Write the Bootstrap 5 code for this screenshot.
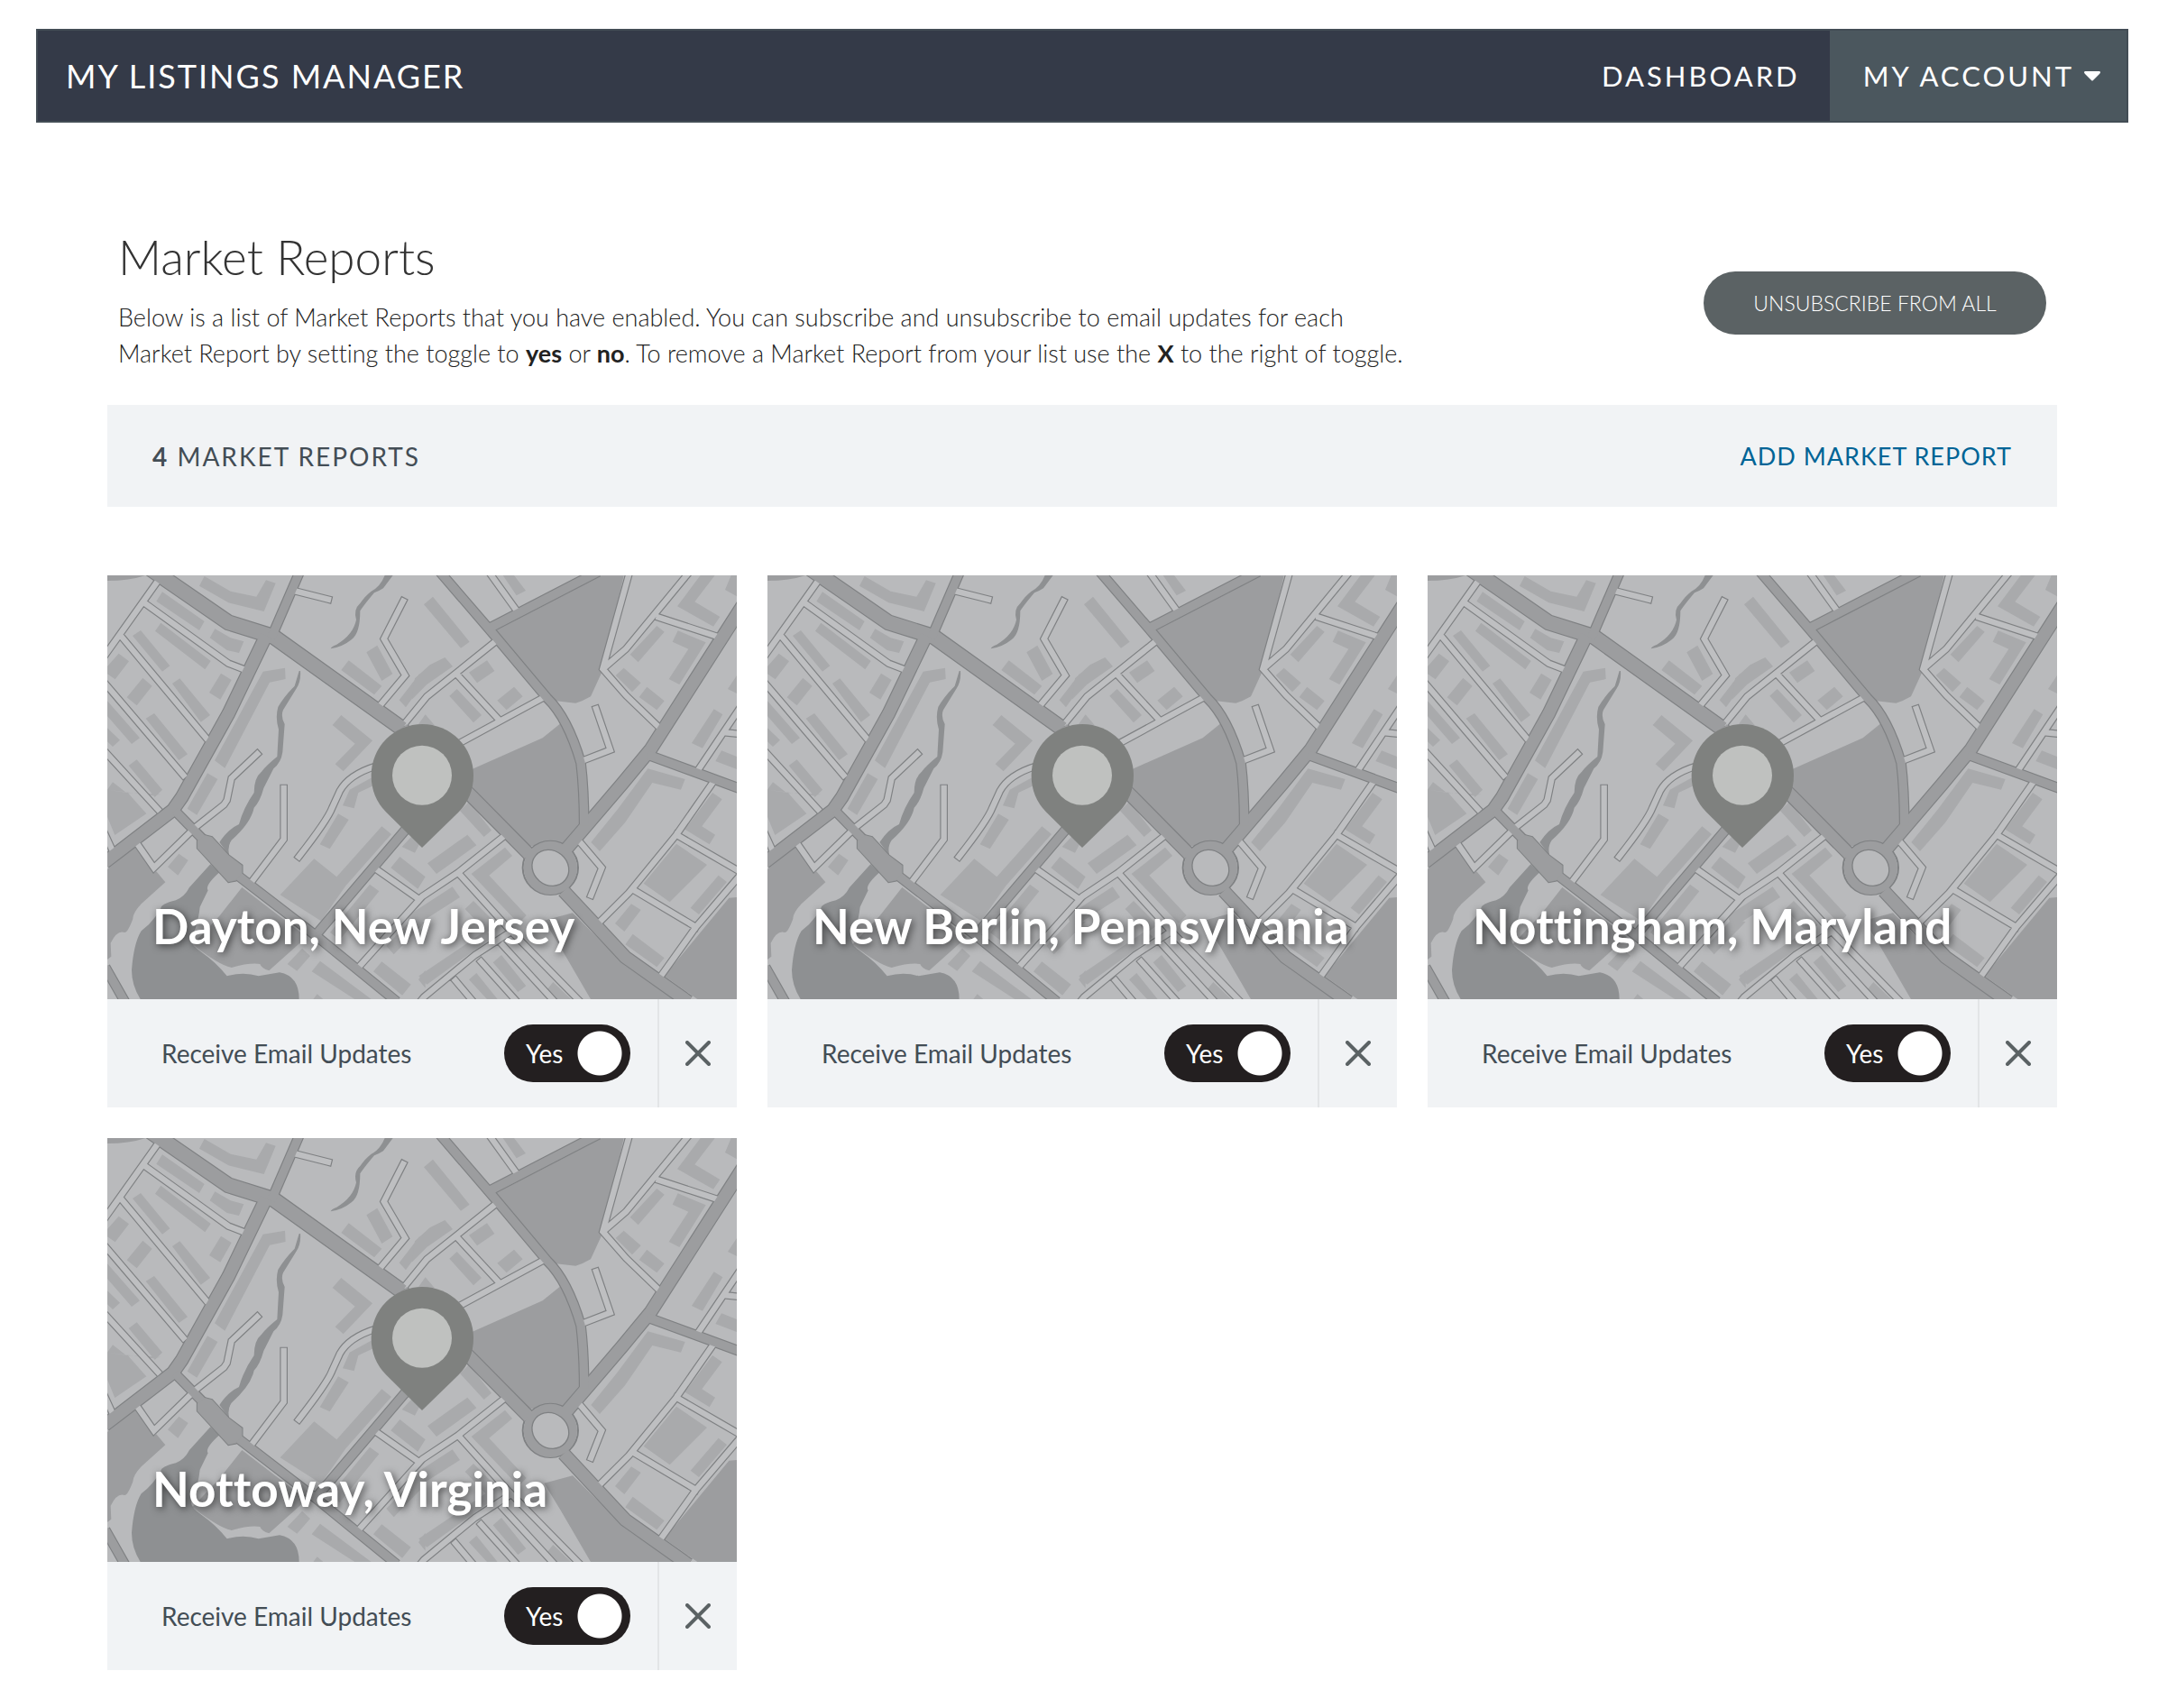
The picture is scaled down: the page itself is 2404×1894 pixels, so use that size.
<!DOCTYPE html>
<html lang="en">
<head>
<meta charset="utf-8">
<meta name="viewport" content="width=device-width, initial-scale=1">
<title>My Listings Manager</title>
<link href="https://cdn.jsdelivr.net/npm/bootstrap@5.3.0/dist/css/bootstrap.min.css" rel="stylesheet">
<style>
  body { font-family: Lato, "Open Sans", sans-serif; font-size: 28px; line-height: 40px; color: #333; background: #fff; font-variant-ligatures: none; }
  .page-frame { padding: 32px 44px 40px 40px; }
  .top-bar { background: #343a48; border: 2px solid #434d55; height: 104px; color: #fff; }
  .top-bar a, .top-bar button { color: #fff; text-decoration: none; }
  .brand-link { font-size: 36px; letter-spacing: 2px; padding-left: 31px; }
  .menu-item { font-size: 31px; letter-spacing: 3px; }
  .menu-dash { padding: 0 33px 0 32px; }
  .menu-account { background: #4b575e; border: 0; padding: 0 29px 0 37px; gap: 11px; }
  .page-body { padding: 119px 79px 0; }
  .page-title { font-size: 53px; line-height: 60px; font-weight: 300; margin-bottom: 17px; }
  .page-intro { font-size: 27px; font-weight: 300; color: #222; margin-bottom: 37px; }
  .page-intro b { font-weight: 700; }
  .unsub-btn { width: 380px; height: 70px; margin-top: 46px; border-radius: 35px; background: #5b6264; color: #fff; font-size: 23px; font-weight: 300; }
  .unsub-btn:hover { background: #4b575e; color: #fff; }
  .count-bar { background: #f1f3f5; min-height: 113px; padding: 0 50px; color: #434d55; margin-bottom: 76px; }
  .count-text { letter-spacing: 2px; }
  .add-link { color: #006496; text-decoration: none; font-size: 27px; letter-spacing: 1px; }
  .report-grid { --bs-gutter-x: 34px; --bs-gutter-y: 34px; }
  .report-map { width: 100%; height: auto; aspect-ratio: 698 / 470; display: block; }
  .report-name { left: 50px; bottom: 51px; font-size: 53px; line-height: 60px; font-weight: 700; color: #fff; text-shadow: 2px 2px 8px rgba(0,0,0,.6); margin: 0; white-space: nowrap; }
  .report-foot { background: #f1f3f5; height: 120px; color: #434d55; }
  .foot-main { padding: 0 30px 0 60px; }
  .foot-close { width: 88px; border: 0; border-left: 2px solid #e3e5e7; background: transparent; padding: 0; }
  .yes-switch { width: 140px; height: 64px; }
  .yes-switch input { appearance: none; width: 140px; height: 64px; border-radius: 32px; margin: 0; display: block; background: #231f20 radial-gradient(circle at 106px 32px, #fff 24px, transparent 25px); cursor: pointer; }
  .yes-word { left: 24px; top: 12px; color: #fff; pointer-events: none; }
  .casing { fill: none; stroke: #7f8183; stroke-linejoin: miter; }
  .lane { fill: none; stroke: #bebfc1; stroke-linejoin: miter; }
  .avenue { fill: none; stroke: #9c9d9f; stroke-linejoin: miter; }
</style>
<script src="https://cdn.jsdelivr.net/npm/bootstrap@5.3.0/dist/js/bootstrap.bundle.min.js"></script>
</head>
<body>

<svg width="0" height="0" class="position-absolute" aria-hidden="true">
  <defs>
    <!-- minor streets -->
    <g id="lanes">
      <path d="M192,50 20,292M155,122 430,320 485,341M76,233 355,567M20,387 280,692M20,614 195,805M655,80 762,107M1011,113 947,238 1018,360 938,455M1018,518 1090,430 1312,252M526,621 440,702 425,775 415,790 320,865 182,1000 130,925M614,735V905L508,1045M920,662Q830,690 800,745L775,800Q760,840 664,963M20,890 42,938M925,1007 1065,1105M868,1325 1075,1095 1195,1015 1350,892M1197,1020 1360,1200 1595,1440M1370,1212 1250,1290 1080,1430 1070,1442M1185,1375 1240,1440M1270,1312 1385,1440M1342,1257 1510,1440M1305,28 1387,142M1763,20 1675,338 1753,427 1860,530M1960,20 1752,272 1685,330M1862,167 2060,232M1653,471 1700,608 1612,642M1190,590 1475,435M1195,362 1325,502M2130,470 1992,675M2085,550 2130,555M2037,722 1920,890 1762,1083 1665,1180M1920,890 2130,1012M1780,1075 1985,1197M2140,1015 1985,1197 1872,1355M1600,915 1672,1000 1636,1091"/>
    </g>
    <!-- through roads, grouped by width -->
    <g id="roads-wide"><path d="M170,5 430,184 580,231 1008,537"/></g>
    <g id="roads-mid"><path d="M555,228 430,487 275,765 245,808 18,982M1008,537 1240,763 1430,955M1545,1077 1750,1297 1960,1446M2145,120 1835,605 1740,720 1545,948"/></g>
    <g id="roads-slim"><path d="M667,15 572,235M252,810 345,905 450,1017 720,1225 990,1445M726,1217 1030,860M1133,15 1305,215 1490,435Q1558,500 1602,650 1613,740 1613,860M1660,15 1295,204M1825,624 2135,738M20,1330 88,1450"/></g>
    <path id="bridge" d="M352,892 375,898 430,958 475,992V1018L455,1042 430,1047 327,935V910Z"/>
    <symbol id="city-map" viewBox="27 27 2094 1410" preserveAspectRatio="none">
      <rect x="27" y="27" width="2094" height="1410" fill="#b9babc"/>
      <!-- parks -->
      <g fill="#9c9d9f">
        <path d="M27,27H155Q100,45 27,45Z"/>
        <path d="M1315,213 1670,28H1745L1675,343 1635,430Q1610,445 1585,452L1520,445Z"/>
        <path d="M1540,515 1475,568 1240,672 1225,745 1433,928H1533L1598,850V720L1580,600Z"/>
        <path d="M27,1005 120,930 182,1017 190,1012 220,1048 140,1120Q112,1150 112,1170 95,1215 85,1215 60,1205 38,1250L40,1295 27,1305Z"/>
        <path d="M475,1065 690,1230 565,1342Q540,1335 535,1320 500,1315 440,1332 400,1325 310,1255L400,1160Z"/>
        <path d="M1480,1175 1575,1150 1750,1325 1910,1437H1635L1535,1265Z"/>
        <path d="M2121,1098 2095,1100 1880,1360 1990,1437H2121Z"/>
      </g>
      <!-- water -->
      <g fill="#8e9092">
        <path d="M370,988 300,1065Q285,1095 255,1108 205,1120 205,1135 180,1180 140,1210 115,1250 108,1340 108,1390 137,1437H665Q665,1360 600,1348 560,1355 530,1360 480,1345 425,1360 390,1315 340,1280 295,1250 310,1230 330,1180 335,1130L362,1075Q350,1060 400,1015Z"/>
        <path d="M665,345H669Q672,380 655,405L612,475Q603,495 617,522L610,615Q605,650 580,670L547,735Q535,780 515,800 505,850 440,908 425,930 433,960L400,915Q430,870 465,855 480,800 515,750 515,700 540,680 555,660 592,630L597,540Q585,500 595,465 615,430 650,395Z"/>
        <path d="M950,27H977L945,70Q930,80 915,85 885,120 868,145 868,220 840,240 810,265 770,271 770,265 790,257 845,225 855,175 845,140 868,120 885,95 905,80 935,65 950,27Z"/>
      </g>
      <!-- buildings -->
      <g fill="#a9aaac">
        <path d="M350,30 437,80 523,98 555,43 587,53 548,147 430,118 333,62ZM210,82 350,180 333,210 190,113ZM385,205 437,235 481,247 465,285 425,276 368,235ZM205,185 371,312 352,340 186,212ZM138,210 235,328 210,347 111,228ZM65,287 99,313 53,373 27,355V330ZM145,368 176,395 125,460 92,433ZM405,353 440,375 403,440 366,417ZM268,370 369,492 338,515 243,387ZM183,486 294,622 265,642 155,503ZM27,445 135,568 108,588 27,495ZM27,535 69,575 45,597 27,580ZM125,640 210,740 185,765 98,660ZM545,347 618,335 620,372 567,383 418,668 384,643ZM360,685 394,705 325,824 293,803ZM830,310 940,395 915,424 805,342ZM925,260 976,355 940,378 889,283ZM805,492 909,577 812,679 785,655 851,587 776,525ZM1065,355 1085,375 1020,466 998,442ZM45,715 90,750 205,755 180,760 27,740ZM27,740 95,750 157,820 52,891 27,830ZM833,740 915,695V725L862,750 848,802 810,793Z"/>
        <path d="M1110,98 1232,248 1203,269 1080,124ZM1380,27 1419,78 1388,94 1343,27ZM1150,300 1176,330 1090,390 1040,440 1050,370 1100,325ZM1290,310 1315,345 1257,385 1230,350ZM1190,405 1272,492 1245,517 1165,428ZM1380,398 1409,430 1355,475 1324,443ZM1085,490 1115,525 1060,525ZM2000,27H2048L1981,115 2065,165 2043,197 1923,130ZM2102,27H2121V97L2082,75ZM1855,195 1880,215 1793,316 1766,290ZM1925,211 2018,250 1930,390 1895,372 1960,272 1907,248ZM1745,335 1802,385 1773,415 1718,360ZM1822,398 1880,445 1855,475 1796,432ZM2045,472 2074,490 2007,602 1971,585ZM2121,360V420L2091,405ZM2070,610 2121,630V672L2050,645ZM1825,670 1949,705 1935,740 1840,717 1749,850 1665,945 1636,915 1725,805Z"/>
        <path d="M265,953 296,975 262,1025 228,997ZM795,820 830,840 767,937 734,922ZM940,862 972,888 820,1060 738,1177 602,1090 715,970 790,1030ZM1040,895 1065,922 1050,950 1007,930ZM1000,963 1085,1030 1060,1070 970,1000ZM900,1055 931,1078 800,1240 768,1215ZM675,1268 702,1293 658,1343 626,1320ZM735,1310 905,1437H850L707,1345ZM940,1312 1037,1388 1008,1424 912,1345ZM1085,1340V1400L1062,1372ZM725,1420 745,1437H712ZM955,1260 1040,1170 1085,1180 980,1288Z"/>
        <path d="M1230,780 1305,875 1280,897 1200,810ZM1225,890 1255,925 1122,1020 1092,985ZM1350,932 1374,960 1297,1025 1421,1158 1395,1185 1238,1020ZM1175,1063 1200,1098 1040,1200 1025,1160ZM1245,1110 1325,1190 1290,1215 1217,1137ZM1285,1210 1310,1230 1090,1388 1063,1360ZM1338,1290 1420,1393 1393,1413 1310,1315ZM1255,1350 1325,1437H1290L1230,1372ZM1510,1380 1570,1437H1520L1490,1405ZM2040,750 2072,772 2005,862 2049,890 2030,922 1948,872ZM1920,920 2022,990 1898,1114 1811,1052ZM2060,1025 2088,1047 1995,1155 1967,1133ZM1770,1120 1802,1140 1747,1212 1716,1185ZM1775,1220 1880,1300 1855,1330 1750,1255Z"/>
      </g>
      <!-- street outlines -->
      <g class="casing">
        <use href="#lanes" stroke-width="26" stroke-linecap="square"/>
        <use href="#roads-wide" stroke-width="54"/>
        <use href="#roads-mid" stroke-width="47"/>
        <use href="#roads-slim" stroke-width="35"/>
        <use href="#bridge" stroke-width="7"/>
        <ellipse cx="1501" cy="1000" rx="92" ry="89" stroke-width="6"/>
      </g>
      <!-- street surfaces -->
      <use href="#lanes" class="lane" stroke-width="19" stroke-linecap="square"/>
      <g class="avenue">
        <use href="#roads-wide" stroke-width="47"/>
        <use href="#roads-mid" stroke-width="40"/>
        <use href="#roads-slim" stroke-width="28"/>
        <use href="#bridge" fill="#9c9d9f"/>
      </g>
      <circle cx="1501" cy="1000" r="89" fill="#9c9d9f"/>
      <ellipse cx="1501" cy="1000" rx="64" ry="57" transform="rotate(40 1501 1000)" fill="#b9babc" stroke="#7f8183" stroke-width="4"/>
      <!-- pin -->
      <path d="M1074,933 955,815Q905,765 905,692A170,170 0 0 1 1245,692Q1245,765 1195,815Z" fill="#7f817f"/>
      <circle cx="1074" cy="692" r="99" fill="#bfc1bf"/>
    </symbol>
  </defs>
</svg>

<div class="page-frame">
  <nav class="top-bar d-flex justify-content-between align-items-stretch">
    <a href="#" class="brand-link d-flex align-items-center">MY LISTINGS MANAGER</a>
    <div class="d-flex align-items-stretch">
      <a href="#" class="menu-item menu-dash d-flex align-items-center">DASHBOARD</a>
      <button type="button" class="menu-item menu-account d-flex align-items-center">MY ACCOUNT
        <svg width="18" height="11" viewBox="0 0 18 11" aria-hidden="true"><path d="M1,0H17Q19,1 17,3L10,10Q9,11 8,10L1,3Q-1,1 1,0Z" fill="#fff"/></svg>
      </button>
    </div>
  </nav>

  <main class="page-body">
    <header class="d-flex justify-content-between align-items-start px-2 mx-1">
      <div>
        <h1 class="page-title">Market Reports</h1>
        <p class="page-intro">Below is a list of Market Reports that you have enabled. You can subscribe and unsubscribe to email updates for each<br>Market Report by setting the toggle to <b>yes</b> or <b>no</b>. To remove a Market Report from your list use the <b>X</b> to the right of toggle.</p>
      </div>
      <button type="button" class="btn unsub-btn flex-shrink-0">UNSUBSCRIBE FROM ALL</button>
    </header>

    <div class="count-bar d-flex justify-content-between align-items-center">
      <span class="count-text"><b>4</b> MARKET REPORTS</span>
      <a href="#" class="add-link">ADD MARKET REPORT</a>
    </div>

    <div class="row row-cols-3 report-grid">
      <div class="col">
        <article>
          <div class="position-relative">
            <svg class="report-map" aria-hidden="true"><use href="#city-map" width="100%" height="100%"/></svg>
            <h2 class="report-name position-absolute">Dayton, New Jersey</h2>
          </div>
          <div class="report-foot d-flex align-items-stretch">
            <div class="foot-main d-flex flex-grow-1 justify-content-between align-items-center">
              <label for="mail-1">Receive Email Updates</label>
              <span class="yes-switch position-relative"><input type="checkbox" role="switch" id="mail-1" checked><span class="yes-word position-absolute">Yes</span></span>
            </div>
            <button type="button" class="foot-close" aria-label="Remove"><svg class="d-block mx-auto" width="28" height="28" viewBox="0 0 28 28"><path d="M2,2 26,26M26,2 2,26" stroke="#5b6264" stroke-width="4" stroke-linecap="round"/></svg></button>
          </div>
        </article>
      </div>
      <div class="col">
        <article>
          <div class="position-relative">
            <svg class="report-map" aria-hidden="true"><use href="#city-map" width="100%" height="100%"/></svg>
            <h2 class="report-name position-absolute">New Berlin, Pennsylvania</h2>
          </div>
          <div class="report-foot d-flex align-items-stretch">
            <div class="foot-main d-flex flex-grow-1 justify-content-between align-items-center">
              <label for="mail-2">Receive Email Updates</label>
              <span class="yes-switch position-relative"><input type="checkbox" role="switch" id="mail-2" checked><span class="yes-word position-absolute">Yes</span></span>
            </div>
            <button type="button" class="foot-close" aria-label="Remove"><svg class="d-block mx-auto" width="28" height="28" viewBox="0 0 28 28"><path d="M2,2 26,26M26,2 2,26" stroke="#5b6264" stroke-width="4" stroke-linecap="round"/></svg></button>
          </div>
        </article>
      </div>
      <div class="col">
        <article>
          <div class="position-relative">
            <svg class="report-map" aria-hidden="true"><use href="#city-map" width="100%" height="100%"/></svg>
            <h2 class="report-name position-absolute">Nottingham, Maryland</h2>
          </div>
          <div class="report-foot d-flex align-items-stretch">
            <div class="foot-main d-flex flex-grow-1 justify-content-between align-items-center">
              <label for="mail-3">Receive Email Updates</label>
              <span class="yes-switch position-relative"><input type="checkbox" role="switch" id="mail-3" checked><span class="yes-word position-absolute">Yes</span></span>
            </div>
            <button type="button" class="foot-close" aria-label="Remove"><svg class="d-block mx-auto" width="28" height="28" viewBox="0 0 28 28"><path d="M2,2 26,26M26,2 2,26" stroke="#5b6264" stroke-width="4" stroke-linecap="round"/></svg></button>
          </div>
        </article>
      </div>
      <div class="col">
        <article>
          <div class="position-relative">
            <svg class="report-map" aria-hidden="true"><use href="#city-map" width="100%" height="100%"/></svg>
            <h2 class="report-name position-absolute">Nottoway, Virginia</h2>
          </div>
          <div class="report-foot d-flex align-items-stretch">
            <div class="foot-main d-flex flex-grow-1 justify-content-between align-items-center">
              <label for="mail-4">Receive Email Updates</label>
              <span class="yes-switch position-relative"><input type="checkbox" role="switch" id="mail-4" checked><span class="yes-word position-absolute">Yes</span></span>
            </div>
            <button type="button" class="foot-close" aria-label="Remove"><svg class="d-block mx-auto" width="28" height="28" viewBox="0 0 28 28"><path d="M2,2 26,26M26,2 2,26" stroke="#5b6264" stroke-width="4" stroke-linecap="round"/></svg></button>
          </div>
        </article>
      </div>
    </div>
  </main>
</div>
</body>
</html>
